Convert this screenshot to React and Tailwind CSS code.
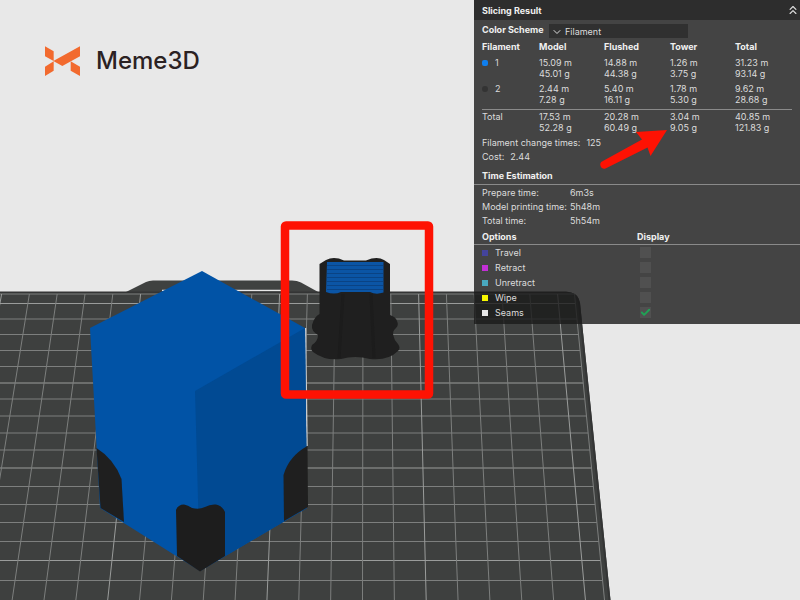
import { Check, ChevronDown, ChevronsUp } from 'lucide-react';

const filaments = [
  { id: '1', swatch: 'bg-[#0f7fef] rounded-xs', cells: [['15.09 m', '45.01 g'], ['14.88 m', '44.38 g'], ['1.26 m', '3.75 g'], ['31.23 m', '93.14 g']] },
  { id: '2', swatch: 'bg-[#333333] rounded-full', cells: [['2.44 m', '7.28 g'], ['5.40 m', '16.11 g'], ['1.78 m', '5.30 g'], ['9.62 m', '28.68 g']] },
];

const totals = [['17.53 m', '52.28 g'], ['20.28 m', '60.49 g'], ['3.04 m', '9.05 g'], ['40.85 m', '121.83 g']];

const times = [
  ['Prepare time:', '6m3s'],
  ['Model printing time:', '5h48m'],
  ['Total time:', '5h54m'],
];

const options = [
  { name: 'Travel', color: 'bg-[#44449c]' },
  { name: 'Retract', color: 'bg-[#c32fd6]' },
  { name: 'Unretract', color: 'bg-[#49a9c0]' },
  { name: 'Wipe', color: 'bg-[#f7f700]' },
  { name: 'Seams', color: 'bg-[#e8e8e8]', checked: true },
];

// Build plate grid, every fifth line is stronger
const rows = [294, 303.5, 319, 334.5, 350.5, 366.5, 383, 399, 416, 433, 450, 468, 486.5, 504.5, 522.5, 541.5, 560.5, 580.5];
const strongRows = [303.5, 383, 468, 560.5];
const cols = Array.from({ length: 24 }, (_, i) => i - 16);

const gridEdge = (y) => 574.5 + ((y - 294) * 30) / 306;

const Scene = () => (
  <svg className="absolute inset-0 h-full w-full" viewBox="0 0 800 600" preserveAspectRatio="xMinYMin slice" aria-hidden="true">
    {/* plate with its handle */}
    <path d="M124 293 L146 282 Q149 280.500 153 280.500 H292 Q297 280.500 301 282.500 L320 293 Z" fill="#3f4140" />
    <path d="M162 290.500 H282" stroke="#e8e8e8" strokeWidth="1.500" />
    <path d="M0 292 H566 Q578 292 580 303 L610.500 600 H0 Z" fill="#3e403f" />
    <path d="M0 292.500 H566 Q577 293 579 303 L609.500 600" fill="none" stroke="#343535" strokeWidth="2" />
    {rows.map((y) => (
      <path key={y} d={`M0 ${y} H${gridEdge(y)}`} stroke={strongRows.includes(y) ? '#9a9c9b' : '#7d7f7e'} strokeWidth="1" />
    ))}
    {cols.map((i) => (
      <path
        key={i}
        d={`M${363 + 27.8 * i} 294 L${362.5 + 31.85 * i} 600`}
        stroke={(i + 18) % 5 === 0 ? '#9a9c9b' : '#7d7f7e'}
        strokeWidth="1"
      />
    ))}
    <path d="M574.500 294 L604.500 600" stroke="#7d7f7e" />

    {/* printed box */}
    <path d="M305.500 328 L307 446" stroke="#c9cdd0" strokeWidth="1.500" />
    <path d="M202 271 L305 328 L307 508 L200 571 L100 508 L90 328 Z" fill="#0153a6" />
    <path d="M195 391 L305 328 L307 508 L200 571 Z" fill="#014a93" />
    <path d="M96.500 448 Q114 459 121.500 479 L124 522 L100.500 508 Z" fill="#1f1f1f" />
    <path d="M307.500 446 Q289 456 283.500 475 L284 521 L308 507 Z" fill="#1f1f1f" />
    <path d="M176 510 Q178 504.500 184 504.500 Q188 505 192 508 Q199 510 205 507 Q210 504 216 504.500 Q222 505.500 225 512 V556 L200 571.500 L177 556 Z" fill="#1d1d1d" />

    {/* prime tower */}
    <path
      d="M319.500 264 L326 260 Q334 256 344 260.500 H366 Q377 256 384 260 L390 264 V315 Q396 317 397 321 Q399 325 396 328 Q392 331 393.500 336 Q394 340 398 344 Q401 348 398 351 Q388 361 370 359 Q355 355 341 359 Q325 361 313 352 Q310 349 312 345 Q318 341 318 335 Q311 331 312 325 Q314 317 319.500 314 Z"
      fill="#1f1f1f"
    />
    <path d="M327 262 H383.500 V292.500 Q376 295 370 292 H341 Q334 295 326 292 Z" fill="#0b55a5" />
    {[265, 269, 273, 277, 281, 285, 289].map((y) => (
      <path key={y} d={`M327 ${y}.5 H383`} stroke="#0a4384" strokeWidth="1" />
    ))}
    <path d="M343 294 L339 358 M371 294 L374 358" stroke="#1c1c1c" strokeWidth="3" fill="none" />
  </svg>
);

const Annotations = () => (
  <svg className="pointer-events-none absolute inset-0 h-full w-full" viewBox="0 0 800 600" preserveAspectRatio="xMinYMin slice" aria-hidden="true">
    <rect x="285" y="225.500" width="144" height="169" rx="1" fill="none" stroke="#fe1203" strokeWidth="8.500" strokeLinejoin="round" />
    <path
      d="M602 161.500 L642 139.500 L636 132 L667 130 L650.500 156 L647.500 147.500 L605.500 168.500 Q601.500 169.500 600.500 166 Q599.500 163 602 161.500 Z"
      fill="#fe1203"
    />
  </svg>
);

const Brand = () => (
  <div className="flex items-center gap-4 pt-[43px] pl-[45px]">
    <svg className="h-[30px] w-[35px]" viewBox="0 0 105 90" aria-hidden="true">
      <path d="M0 1 L26 16 V45 L0 31 Z" fill="#f26a2e" />
      <path d="M25 45 L105 1 V31 L52 60 Z" fill="#f26a2e" />
      <path d="M0 62 L26 46 V74 L0 90 Z" fill="#f26a2e" />
      <path d="M77 46 L105 62 V90 L77 74 Z" fill="#f26a2e" />
    </svg>
    <h1 className="text-[24px] leading-9 font-medium text-[#2b2223]">Meme3D</h1>
  </div>
);

const Amount = ({ value }) => (
  <td className="p-0 align-top">
    {value[0]}
    <br />
    {value[1]}
  </td>
);

const SlicingPanel = () => (
  <section className="w-[326px] bg-[#1a1a1a]/80 pb-1 text-[9px] leading-[11px] text-[#dcdcdc]">
    <header className="flex h-5 items-center justify-between bg-[#2d2d2d] pl-2">
      <h2 className="font-bold text-[#f0f0f0]">Slicing Result</h2>
      <button type="button" aria-label="Collapse">
        <ChevronsUp className="size-3.5" strokeWidth={2} />
      </button>
    </header>

    <div className="flex items-start px-2 pt-1">
      <label htmlFor="scheme" className="w-[67px] font-bold text-[#f0f0f0]">Color Scheme</label>
      <div className="relative">
        <ChevronDown className="pointer-events-none absolute top-0.5 left-0.5 size-3" strokeWidth={2} />
        <select id="scheme" className="block h-3.5 w-[139px] appearance-none bg-[#303030] pl-4">
          <option>Filament</option>
        </select>
      </div>
    </div>

    <table className="mt-0.5 w-full table-fixed border-collapse text-left">
      <colgroup>
        <col className="w-[65px]" />
        <col className="w-[65px]" />
        <col className="w-[66px]" />
        <col className="w-[65px]" />
        <col />
      </colgroup>
      <thead className="border-b border-[#8a8a8a] text-[#f0f0f0]">
        <tr className="h-[15px]">
          <th className="p-0 pl-2">Filament</th>
          <th className="p-0">Model</th>
          <th className="p-0">Flushed</th>
          <th className="p-0">Tower</th>
          <th className="p-0">Total</th>
        </tr>
      </thead>
      <tbody>
        {filaments.map((f) => (
          <tr key={f.id} className="border-t-4 border-transparent">
            <td className="p-0 pl-2 align-top">
              <span className="flex items-center gap-[7px]">
                <span className={`size-1.5 ${f.swatch}`} />
                {f.id}
              </span>
            </td>
            {f.cells.map((c) => <Amount key={c[0]} value={c} />)}
          </tr>
        ))}
      </tbody>
      <tbody>
        <tr>
          <td colSpan={5} className="px-2 pt-1 pb-px">
            <hr className="border-[#8a8a8a]" />
          </td>
        </tr>
        <tr>
          <td className="p-0 pl-2 align-top">Total</td>
          {totals.map((c) => <Amount key={c[0]} value={c} />)}
        </tr>
      </tbody>
    </table>

    <p className="flex gap-1.5 px-2 pt-1"><span>Filament change times:</span><span>125</span></p>
    <p className="flex gap-1.5 px-2 pt-[3px]"><span>Cost:</span><span>2.44</span></p>

    <h3 className="mt-2 border-b border-[#8a8a8a] px-2 pb-[3px] font-bold text-[#f0f0f0]">Time Estimation</h3>
    <dl className="px-2">
      {times.map(([label, value]) => (
        <div key={label} className="flex h-3.5 items-center">
          <dt className="w-[88px] whitespace-nowrap">{label}</dt>
          <dd>{value}</dd>
        </div>
      ))}
    </dl>

    <div className="mt-1 flex border-b border-[#8a8a8a] px-2 pb-0.5 font-bold text-[#f0f0f0]">
      <h3 className="w-[155px]">Options</h3>
      <h3>Display</h3>
    </div>
    <ul>
      {options.map((o) => (
        <li key={o.name} className="flex h-[15px] items-center px-2">
          <label htmlFor={o.name} className="flex w-[158px] items-center gap-[7px]">
            <span className={`size-1.5 ${o.color}`} />
            {o.name}
          </label>
          <span className="relative flex">
            <input id={o.name} type="checkbox" defaultChecked={o.checked} className="peer size-[11px] appearance-none bg-[#808080]/20" />
            <Check className="pointer-events-none invisible absolute inset-0 size-[11px] text-[#1fa355] peer-checked:visible" strokeWidth={4} />
          </span>
        </li>
      ))}
    </ul>
  </section>
);

const App = () => (
  <main className="relative min-h-screen overflow-hidden bg-[#e8e8e8] font-['Inter',sans-serif]">
    <Scene />
    <div className="relative flex items-start justify-between">
      <Brand />
      <SlicingPanel />
    </div>
    <Annotations />
  </main>
);

export default App;
